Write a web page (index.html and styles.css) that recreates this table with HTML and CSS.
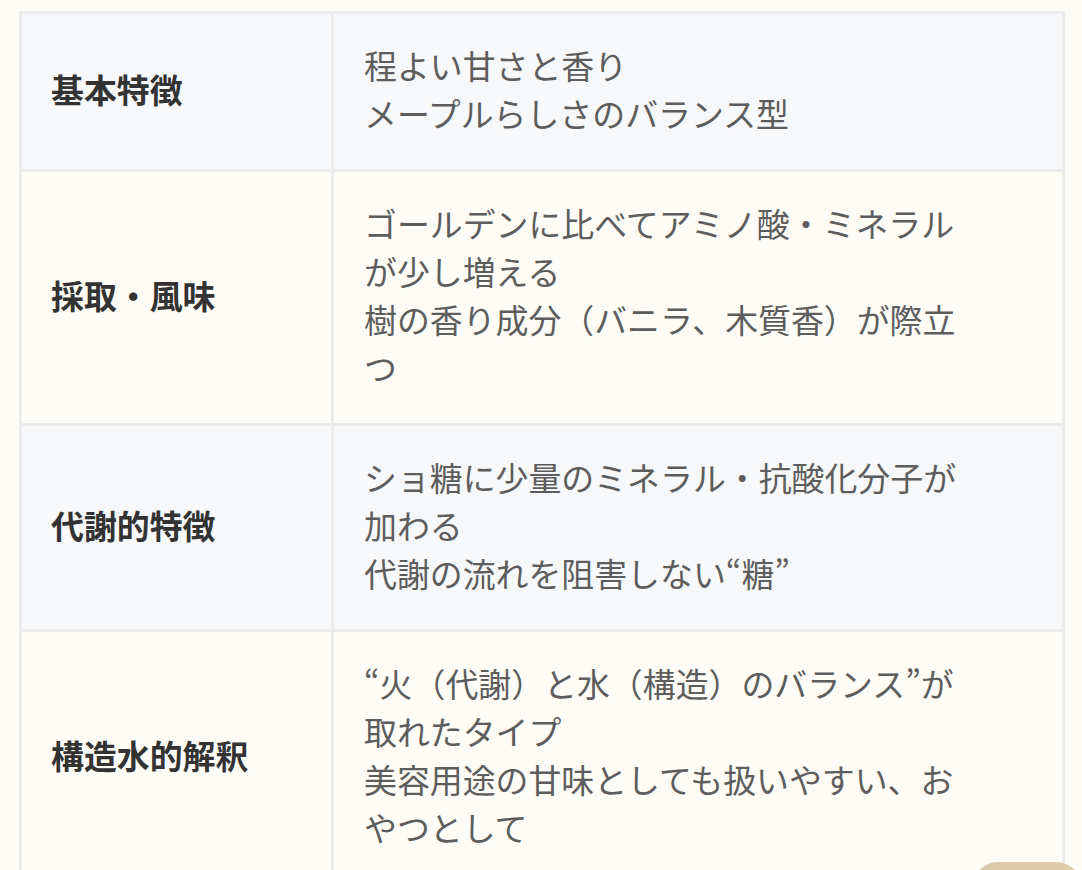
FILE: index.html
```html
<!DOCTYPE html>
<html lang="ja">
<head>
<meta charset="utf-8">
<link rel="stylesheet" href="styles.css">
</head>
<body>
<div class="page">
  <table class="spec">
    <tbody>
      <tr class="row-alt">
        <th>基本特徴</th>
        <td>程よい甘さと香り<br>メープルらしさのバランス型</td>
      </tr>
      <tr>
        <th>採取・風味</th>
        <td>ゴールデンに比べてアミノ酸・ミネラルが少し増える<br>樹の香り成分（バニラ、木質香）が際立つ</td>
      </tr>
      <tr class="row-alt">
        <th>代謝的特徴</th>
        <td>ショ糖に少量のミネラル・抗酸化分子が加わる<br>代謝の流れを阻害しない“糖”</td>
      </tr>
      <tr>
        <th>構造水的解釈</th>
        <td>“火（代謝）と水（構造）のバランス”が取れたタイプ<br>美容用途の甘味としても扱いやすい、おやつとして</td>
      </tr>
    </tbody>
  </table>
</div>
<div class="fab"></div>
</body>
</html>
```
FILE: styles.css
```css
html, body {
  margin: 0;
  padding: 0;
  background: #fdfcf7;
  height: 100%;
  overflow: hidden;
}
.page {
  padding: 11px 17px 0 19px;
}
.spec {
  width: 1046px;
  border-collapse: collapse;
  font-family: "Noto Sans CJK JP", "Noto Sans", sans-serif;
  font-size: 32.9px;
  line-height: 48px;
}
.spec th,
.spec td {
  border: 3px solid #ececec;
  vertical-align: middle;
  text-align: left;
}
.spec th {
  width: 250px;
  padding: 27px 30px 32px 29px;
  font-weight: 700;
  color: #333333;
}
.spec td {
  padding: 27px 95px 32px 30px;
  font-weight: 400;
  color: #5d5d5d;
}
.row-alt th,
.row-alt td {
  background: #f7f8f9;
}
.fab {
  position: fixed;
  left: 972px;
  top: 862px;
  width: 110px;
  height: 60px;
  border-radius: 26px;
  background: #dccbab;
}
```
